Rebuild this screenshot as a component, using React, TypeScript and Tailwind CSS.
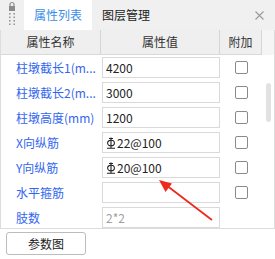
import React from "react";

const ROWS = [
    { label: "柱墩截长1(mm)", shown: "柱墩截长1(m...", value: "4200", check: true },
    { label: "柱墩截长2(mm)", shown: "柱墩截长2(m...", value: "3000", check: true },
    { label: "柱墩高度(mm)", value: "1200", check: true },
    { label: "X向纵筋", value: "22@100", bar: true, check: true },
    { label: "Y向纵筋", value: "20@100", bar: true, check: true },
    { label: "水平箍筋", value: "", check: true },
    { label: "肢数", value: "2*2", muted: true, check: false },
];

// grade III rebar mark
const BarMark = () => (
    <svg width="10" height="12" viewBox="0 0 10 12" className="mr-[1px] shrink-0">
        <path d="M5 0.5V11M3 1.5H7M1 11.2H9" stroke="#222" strokeWidth="1.1" fill="none" />
        <ellipse cx="5" cy="6" rx="3.4" ry="2.8" stroke="#222" strokeWidth="1.1" fill="none" />
    </svg>
);

const LockHandle = () => (
    <svg width="10" height="24" viewBox="0 0 10 24">
        <path d="M3 5V3.5a2 2 0 0 1 4 0V5" stroke="#8a8a8a" strokeWidth="1.2" fill="none" />
        <rect x="2" y="5" width="6" height="5" fill="#8a8a8a" />
        {[13, 16.5, 20, 23.5].map((y) => (
            <React.Fragment key={y}>
                <rect x="2" y={y - 1} width="1.6" height="1.6" fill="#9a9a9a" />
                <rect x="6.4" y={y - 1} width="1.6" height="1.6" fill="#9a9a9a" />
            </React.Fragment>
        ))}
    </svg>
);

export default function App() {
    return (
        <div
            className="relative w-[275px] h-[259px] bg-white overflow-hidden text-[12px] text-[#333]"
            style={{ fontFamily: '"Noto Sans CJK SC", "Noto Sans", sans-serif' }}
        >
            {/* tabs */}
            <div className="flex h-[30px] bg-[#f0f0f0]">
                <div className="w-[24px] flex justify-center items-start pt-[1px]">
                    <LockHandle />
                </div>
                <div className="w-[68px] bg-white flex items-center justify-center text-[#3a8ee6]">属性列表</div>
                <div className="px-[10px] flex items-center text-[#222]">图层管理</div>
                <div className="flex-1" />
                <div className="w-[20px] mr-[6px] flex items-center justify-center text-[#9a9a9a]">
                    <svg width="9" height="9" viewBox="0 0 9 9">
                        <path d="M0.5 0.5L8.5 8.5M8.5 0.5L0.5 8.5" stroke="#9a9a9a" strokeWidth="1.1" />
                    </svg>
                </div>
            </div>

            {/* table */}
            <div className="flex h-[199px] border-l border-r border-b border-[#dcdcdc] box-border w-[275px]">
                <div className="w-[261px] flex flex-col">
                    <div className="flex h-[25px] bg-[#efefef] border-b border-[#d9d9d9] text-[#333]">
                        <div className="w-[100px] flex items-center justify-center border-r border-[#d5d5d5]">属性名称</div>
                        <div className="w-[119px] flex items-center justify-center border-r border-[#d5d5d5]">属性值</div>
                        <div className="flex-1 flex items-center justify-center border-r border-[#d5d5d5]">附加</div>
                    </div>
                    <div className="flex-1 overflow-hidden">
                        {ROWS.map((r) => (
                            <div key={r.label} className="flex h-[25px] items-center">
                                <div title={r.label} className="w-[101px] pl-[15px] pr-0 truncate text-[#3366ee]">
                                    {r.shown ?? r.label}
                                </div>
                                <div className="w-[118px] h-[21px] border border-[#d9d9d9] flex items-center pl-[3px]">
                                    {r.bar && <BarMark />}
                                    <span className={r.muted ? "text-[#a0a0a0]" : "text-[#222]"}>{r.value}</span>
                                </div>
                                <div className="flex-1 flex justify-center">
                                    {r.check && (
                                        <div className="w-[13px] h-[13px] border border-[#8a8a8a] rounded-[2px] bg-white" />
                                    )}
                                </div>
                            </div>
                        ))}
                    </div>
                </div>
                <div className="flex-1 flex flex-col">
                    <div className="h-[25px] bg-[#f5f5f5]" />
                    <div className="pl-[4px] pt-[28px]">
                        <div className="w-[5px] h-[39px] rounded-full bg-[#e2e2e2]" />
                    </div>
                </div>
            </div>

            {/* bottom */}
            <div className="pt-[3px] pl-[6px]">
                <button className="w-[80px] h-[23px] border border-[#bcbcbc] rounded-[3px] bg-white text-[#222] flex items-center justify-center">
                    参数图
                </button>
            </div>

            {/* annotation arrow */}
            <svg className="absolute left-0 top-0 pointer-events-none" width="275" height="259">
                <line x1="212" y1="220" x2="166" y2="185" stroke="#ee2a1e" strokeWidth="1.8" />
                <polygon points="159,180 172,183.5 165.5,192" fill="#ee2a1e" />
            </svg>
        </div>
    );
}
